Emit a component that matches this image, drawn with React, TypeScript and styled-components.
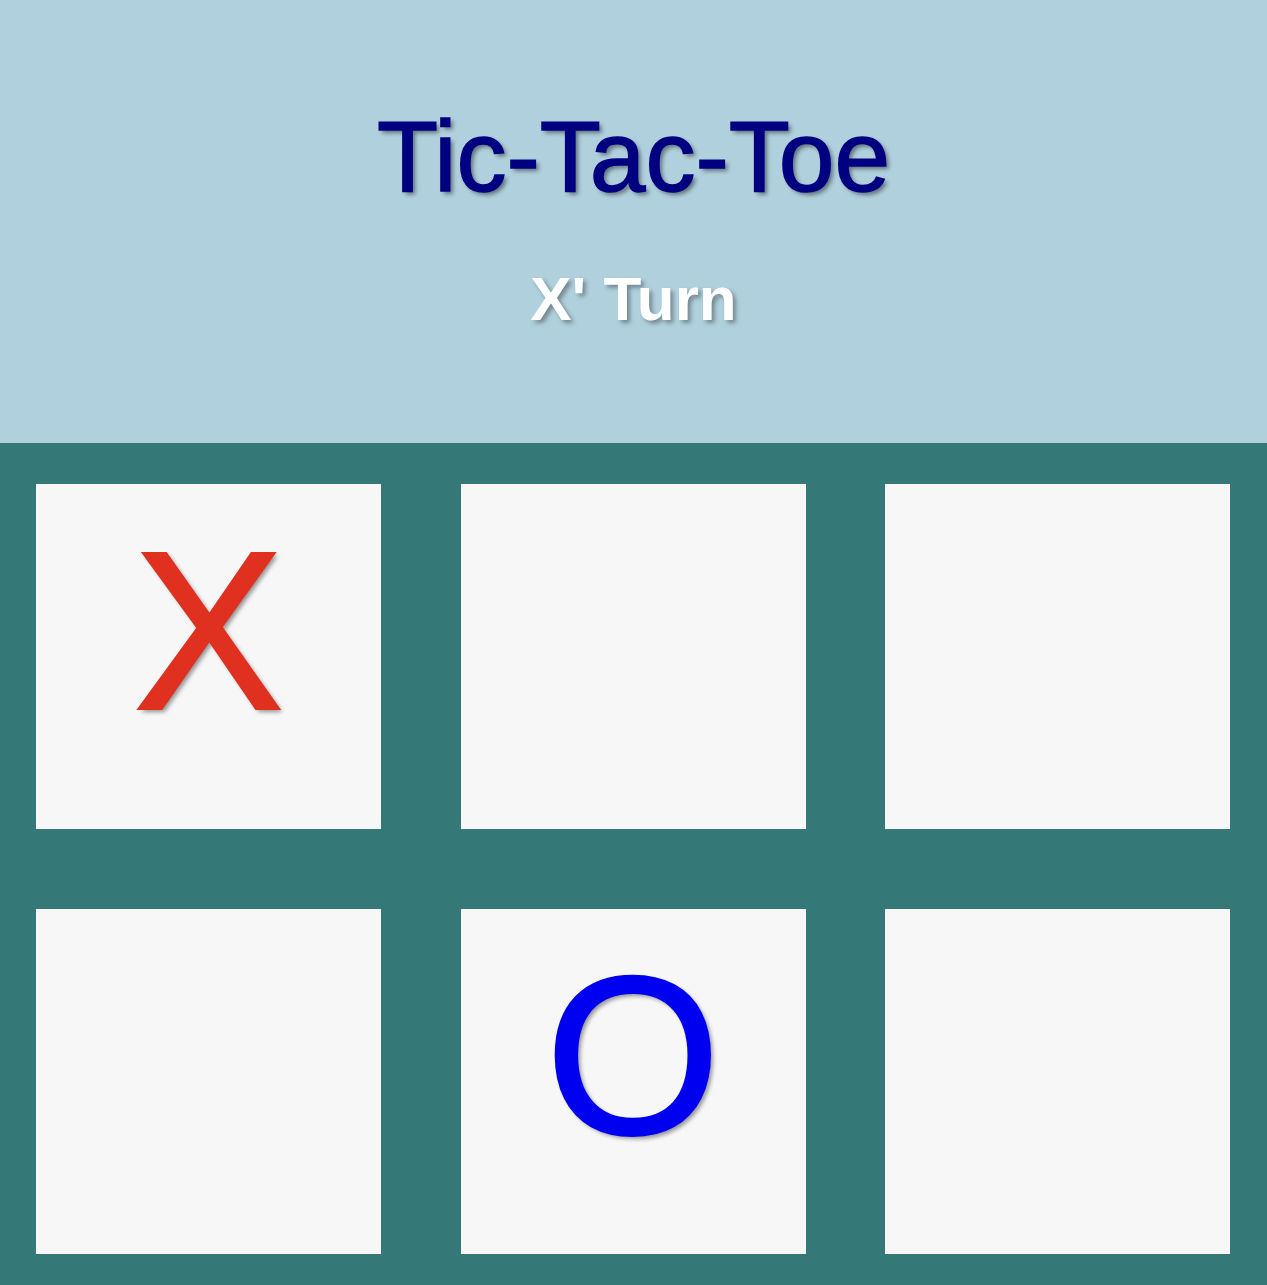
import React from "react";
import styled, { createGlobalStyle } from "styled-components";

const GlobalStyle = createGlobalStyle`
  html, body { margin: 0; padding: 0; }
  body { font-family: "Liberation Sans", Arial, Helvetica, sans-serif; background: #357878; }
`;

const Header = styled.header`
  background: #b0d0dd;
  height: 443px;
  box-sizing: border-box;
  padding-top: 106px;
  display: flex;
  flex-direction: column;
  align-items: center;
`;

const Title = styled.h1`
  margin: 0;
  font-size: 100px;
  line-height: 1;
  font-weight: 400;
  color: #000080;
  -webkit-text-stroke: 1.5px #000080;
  text-shadow: 3px 3px 4px rgba(0, 0, 0, 0.45);
`;

const Status = styled.h2`
  margin: 62px 0 0;
  font-size: 62px;
  line-height: 1;
  font-weight: 700;
  color: #ffffff;
  text-shadow: 3px 3px 4px rgba(0, 0, 0, 0.35);
`;

const Board = styled.main`
  background: #357878;
  padding: 41px 36px 0;
  display: grid;
  grid-template-columns: repeat(3, 345px);
  grid-auto-rows: 345px;
  column-gap: 79.5px;
  row-gap: 80px;
`;

const Cell = styled.div<{ $mark?: "X" | "O" }>`
  background: #f7f7f7;
  display: flex;
  align-items: center;
  justify-content: center;
  padding-bottom: 52px;
  box-sizing: border-box;
  font-size: 226px;
  line-height: 1;
  color: ${(p) => (p.$mark === "X" ? "#e03020" : "#0000f0")};
  -webkit-text-stroke: 2px ${(p) => (p.$mark === "X" ? "#e03020" : "#0000f0")};
  text-shadow: 3px 3px 4px rgba(0, 0, 0, 0.4);
  cursor: pointer;
`;

const cells: ("X" | "O" | "")[] = ["X", "", "", "", "O", "", "", "", ""];

export default function App() {
  return (
    <>
      <GlobalStyle />
      <Header>
        <Title>Tic-Tac-Toe</Title>
        <Status>X' Turn</Status>
      </Header>
      <Board>
        {cells.map((c, i) => (
          <Cell key={i} $mark={c || undefined}>
            {c}
          </Cell>
        ))}
      </Board>
    </>
  );
}
